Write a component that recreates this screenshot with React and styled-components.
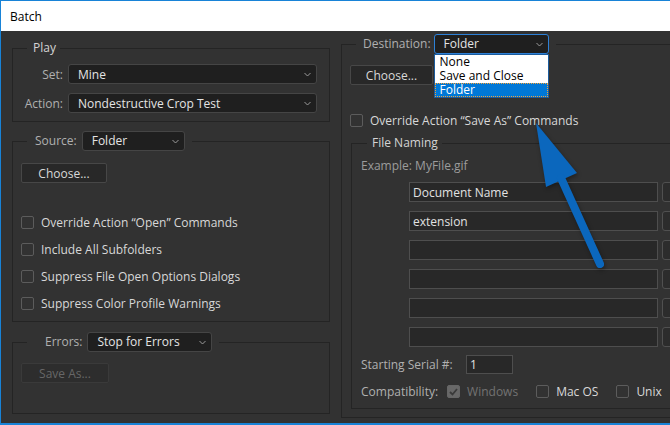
import React from "react";
import styled, { createGlobalStyle } from "styled-components";

const FONT = `"Open Sans", "Noto Sans", "Liberation Sans", sans-serif`;

const GlobalStyle = createGlobalStyle`
  html, body {
    margin: 0;
    padding: 0;
    width: 670px;
    height: 425px;
    overflow: hidden;
    background: #323232;
  }
  * { box-sizing: border-box; }
`;

const Window = styled.div`
  position: relative;
  width: 670px;
  height: 425px;
  display: flex;
  flex-direction: column;
  border-left: 1px solid #1883d7;
  border-top: 1px solid #1883d7;
  border-bottom: 2px solid #1883d7;
  font-family: ${FONT};
  font-size: 12px;
  overflow: hidden;
`;

const TitleBar = styled.div`
  height: 30px;
  flex: none;
  background: #fff;
  color: #000;
  display: flex;
  align-items: center;
  padding-left: 9px;
`;

const Body = styled.div`
  flex: 1;
  background: #323232;
  display: flex;
  align-items: flex-start;
  gap: 11px;
  padding-left: 11px;
  overflow: hidden;
`;

const Column = styled.div`
  flex: none;
  width: ${(p) => p.$width}px;
  padding-top: ${(p) => p.$top}px;
  display: flex;
  flex-direction: column;
`;

const Group = styled.fieldset`
  margin: ${(p) => p.$mt || 0}px 0 0 ${(p) => p.$ml || 0}px;
  padding: 0 9px ${(p) => p.$pb}px ${(p) => p.$pl || 8}px;
  border: 1px solid #242424;
  min-width: 0;
  display: flex;
  flex-direction: column;
  align-items: flex-start;
`;

const Legend = styled.legend`
  margin-left: 6px;
  padding: 0 ${(p) => p.$pr || 4}px 0 ${(p) => p.$pl || 6}px;
  line-height: 16px;
  color: #d4d4d4;
`;

const LegendRow = styled.span`
  display: flex;
  align-items: center;
  gap: ${(p) => p.$gap || 5}px;
`;

const FieldLabel = styled.span`
  color: #b0b0b0;
  white-space: nowrap;
  text-align: ${(p) => (p.$right ? "right" : "left")};
  width: ${(p) => (p.$width ? `${p.$width}px` : "auto")};
  flex: none;
`;

const FormGrid = styled.div`
  align-self: stretch;
  display: grid;
  grid-template-columns: 42px 1fr;
  column-gap: 5px;
  row-gap: 9px;
  align-items: center;
  margin: 8px 3px 0 0;
`;

const SelectBox = styled.div`
  position: relative;
  display: flex;
  align-items: center;
  justify-content: space-between;
  width: ${(p) => (p.$width ? `${p.$width}px` : "auto")};
  height: 20px;
  padding: 0 5px 0 9px;
  background: #1f1f1f;
  border: 1px solid ${(p) => (p.$focused ? "#2d80d6" : "#454545")};
  border-radius: 3px;
  color: #e4e4e4;
  white-space: nowrap;
`;

const Chevron = styled.svg`
  width: 7px;
  height: 5px;
  flex: none;
`;

const DropList = styled.ul`
  position: absolute;
  left: -1px;
  top: 19px;
  width: calc(100% + 2px);
  margin: 0;
  padding: 0;
  list-style: none;
  background: #fff;
  border: 1px solid #1b5b9c;
  z-index: 2;
`;

const DropItem = styled.li`
  height: 14px;
  line-height: 14px;
  padding-left: 5px;
  color: ${(p) => (p.$active ? "#fff" : "#000")};
  background: ${(p) => (p.$active ? "#0078d7" : "transparent")};
  outline: ${(p) => (p.$active ? "1px dotted #f2a33a" : "none")};
  outline-offset: -1px;
`;

const Button = styled.button`
  width: ${(p) => p.$width}px;
  height: 20px;
  margin-top: ${(p) => p.$mt || 0}px;
  padding: 0;
  font: inherit;
  background: ${(p) => (p.disabled ? "#2d2d2d" : "#282828")};
  border: 1px solid ${(p) => (p.disabled ? "#3a3a3a" : "#474747")};
  border-radius: 2px;
  color: ${(p) => (p.disabled ? "#676767" : "#d8d8d8")};
`;

const CheckList = styled.div`
  display: flex;
  flex-direction: column;
  gap: 10px;
  margin-top: ${(p) => p.$mt || 0}px;
`;

const CheckRow = styled.label`
  display: flex;
  align-items: center;
  gap: 7px;
  height: 17px;
  margin-top: ${(p) => p.$mt || 0}px;
  margin-left: ${(p) => p.$ml || 0}px;
  color: ${(p) => (p.$disabled ? "#727272" : "#d8d8d8")};
  white-space: nowrap;
`;

const Box = styled.span`
  width: 13px;
  height: 13px;
  flex: none;
  border: 1px solid ${(p) => (p.$checked ? "#666" : "#5c5c5c")};
  border-radius: 2px;
  background: ${(p) => (p.$checked ? "#686868" : "transparent")};
  display: flex;
  align-items: center;
  justify-content: center;
`;

const ExampleText = styled.div`
  line-height: 16px;
  margin-top: 7px;
  color: #9c9c9c;
`;

const NamingGrid = styled.div`
  display: grid;
  grid-template-columns: 249px 100px;
  column-gap: 4px;
  row-gap: 9px;
  margin: 8px 0 0 48px;
`;

const TextField = styled.div`
  height: 20px;
  width: ${(p) => (p.$width ? `${p.$width}px` : "auto")};
  padding-left: 3px;
  display: flex;
  align-items: center;
  background: #282828;
  border: 1px solid #4e4e4e;
  color: #e2e2e2;
`;

const TokenSelect = styled.div`
  height: 20px;
  background: #2c2c2c;
  border: 1px solid #505050;
  border-radius: 3px;
`;

const InlineRow = styled.div`
  display: flex;
  align-items: center;
  margin-top: ${(p) => p.$mt || 0}px;
`;

const SerialField = styled(TextField)`
  height: 19px;
`;

const ArrowLayer = styled.svg`
  position: absolute;
  left: -1px;
  top: -1px;
  width: 670px;
  height: 425px;
  pointer-events: none;
  filter: drop-shadow(1px 2px 2px rgba(0, 0, 0, 0.35));
`;

const ChevronIcon = () => (
  <Chevron viewBox="0 0 7 5">
    <path d="M0.5 1 L3.5 4 L6.5 1" fill="none" stroke="#9a9a9a" strokeWidth="1" />
  </Chevron>
);

const Select = ({ value, width, focused, children }) => (
  <SelectBox $width={width} $focused={focused}>
    <span>{value}</span>
    <ChevronIcon />
    {children}
  </SelectBox>
);

const Check = ({ label, checked, disabled, mt, ml }) => (
  <CheckRow $disabled={disabled} $mt={mt} $ml={ml}>
    <Box $checked={checked}>
      {checked && (
        <svg width="9" height="8" viewBox="0 0 9 8">
          <path d="M1 4 L3.5 6.5 L8 1" fill="none" stroke="#3a3a3a" strokeWidth="1.8" />
        </svg>
      )}
    </Box>
    {label}
  </CheckRow>
);

const namingRows = ["Document Name", "extension", "", "", "", ""];

export default function App() {
  return (
    <>
      <GlobalStyle />
      <Window>
        <TitleBar>Batch</TitleBar>
        <Body>
          <Column $width={318} $top={9}>
            <Group $pb={8}>
              <Legend>Play</Legend>
              <FormGrid>
                <FieldLabel $right>Set:</FieldLabel>
                <Select value="Mine" />
                <FieldLabel $right>Action:</FieldLabel>
                <Select value="Nondestructive Crop Test" />
              </FormGrid>
            </Group>

            <Group $mt={9} $pb={9}>
              <Legend $pl={8} $pr={7}>
                <LegendRow>
                  <FieldLabel>Source:</FieldLabel>
                  <Select value="Folder" width={103} />
                </LegendRow>
              </Legend>
              <Button $width={86} $mt={12}>Choose...</Button>
              <CheckList $mt={31}>
                <Check label="Override Action “Open” Commands" />
                <Check label="Include All Subfolders" />
                <Check label="Suppress File Open Options Dialogs" />
                <Check label="Suppress Color Profile Warnings" />
              </CheckList>
            </Group>

            <Group $mt={10} $pb={30}>
              <Legend $pl={18} $pr={7}>
                <LegendRow>
                  <FieldLabel>Errors:</FieldLabel>
                  <Select value="Stop for Errors" width={125} />
                </LegendRow>
              </Legend>
              <Button $width={88} $mt={11} disabled>
                Save As...
              </Button>
            </Group>
          </Column>

          <Column $width={420} $top={3}>
            <Group $pb={8}>
              <Legend $pl={7} $pr={7}>
                <LegendRow $gap={3}>
                  <FieldLabel>Destination:</FieldLabel>
                  <Select value="Folder" width={115} focused>
                    <DropList>
                      <DropItem>None</DropItem>
                      <DropItem>Save and Close</DropItem>
                      <DropItem $active>Folder</DropItem>
                    </DropList>
                  </Select>
                </LegendRow>
              </Legend>
              <Button $width={83} $mt={11}>Choose...</Button>
              <Check label="Override Action “Save As” Commands" mt={27} />

              <Group $mt={6} $ml={1} $pl={9} $pb={8}>
                <Legend $pl={5}>File Naming</Legend>
                <ExampleText>Example: MyFile.gif</ExampleText>
                <NamingGrid>
                  {namingRows.map((text, i) => (
                    <React.Fragment key={i}>
                      <TextField>{text}</TextField>
                      <TokenSelect />
                    </React.Fragment>
                  ))}
                </NamingGrid>
                <InlineRow $mt={8}>
                  <FieldLabel $width={105}>Starting Serial #:</FieldLabel>
                  <SerialField $width={47}>1</SerialField>
                </InlineRow>
                <InlineRow $mt={9}>
                  <FieldLabel>Compatibility:</FieldLabel>
                  <Check label="Windows" checked disabled ml={9} />
                  <Check label="Mac OS" ml={18} />
                  <Check label="Unix" ml={18} />
                </InlineRow>
              </Group>
            </Group>
          </Column>
        </Body>

        <ArrowLayer viewBox="0 0 670 425">
          <polygon points="536,123 546,187 577,173" fill="#0b67bd" />
          <line
            x1="561"
            y1="178"
            x2="600"
            y2="264"
            stroke="#0b67bd"
            strokeWidth="8"
            strokeLinecap="round"
          />
        </ArrowLayer>
      </Window>
    </>
  );
}
